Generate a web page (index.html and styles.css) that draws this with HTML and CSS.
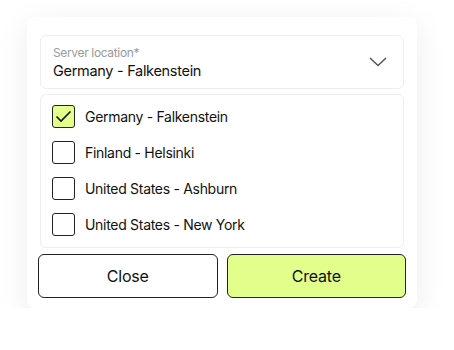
FILE: index.html
```html
<!DOCTYPE html>
<html lang="en">
<head>
    <meta charset="UTF-8">
    <title>Server location</title>
    <link rel="stylesheet" href="styles.css">
</head>
<body>
    <div class="card">
        <div class="select">
            <div class="select-text">
                <span class="label">Server location*</span>
                <span class="value">Germany - Falkenstein</span>
            </div>
            <svg class="chevron" width="18" height="10" viewBox="0 0 18 10">
                <path d="M1 1 L9 8.5 L17 1" fill="none" stroke="#555" stroke-width="1.5"/>
            </svg>
        </div>

        <div class="options">
            <label class="option">
                <span class="box checked">
                    <svg width="17" height="13" viewBox="0 0 17 13">
                        <path d="M1.5 6.5 L6 11 L15.5 1.5" fill="none" stroke="#111" stroke-width="1.6"/>
                    </svg>
                </span>
                Germany - Falkenstein
            </label>
            <label class="option"><span class="box"></span>Finland - Helsinki</label>
            <label class="option"><span class="box"></span>United States - Ashburn</label>
            <label class="option"><span class="box"></span>United States - New York</label>
        </div>

        <div class="actions">
            <button class="btn">Close</button>
            <button class="btn primary">Create</button>
        </div>
    </div>
</body>
</html>
```

FILE: styles.css
```css
* {
    margin: 0;
    padding: 0;
    box-sizing: border-box;
}

body {
    background: #fff;
    font-family: 'Inter', 'Liberation Sans', sans-serif;
    color: #111;
    padding: 17px 0 0 27px;
}

.card {
    width: 390px;
    background: #fff;
    border-radius: 8px;
    padding: 18px 11px 10px;
    box-shadow: 0 8px 32px rgba(0, 0, 0, 0.08);
}

.select {
    margin: 0 2px;
    height: 54px;
    border: 1px solid #eeeeee;
    border-radius: 6px;
    display: flex;
    align-items: center;
    justify-content: space-between;
    padding: 0 16px 0 12px;
}

.select-text {
    display: flex;
    flex-direction: column;
}

.label {
    font-size: 12px;
    letter-spacing: -0.35px;
    color: #9a9a9a;
    line-height: 17px;
}

.value {
    font-size: 14.5px;
    letter-spacing: -0.3px;
    line-height: 20px;
}

.options {
    margin: 5px 2px 0;
    border: 1px solid #eeeeee;
    border-radius: 6px;
    padding: 10px 11px 11px;
    display: flex;
    flex-direction: column;
    gap: 13px;
}

.option {
    display: flex;
    align-items: center;
    gap: 10px;
    font-size: 14px;
    letter-spacing: -0.3px;
    height: 23px;
}

.box {
    width: 23px;
    height: 23px;
    border: 1.5px solid #222;
    border-radius: 3px;
    display: flex;
    align-items: center;
    justify-content: center;
}

.box.checked {
    background: #e4ff8c;
}

.actions {
    display: flex;
    gap: 9px;
    margin-top: 6px;
}

.btn {
    flex: 1;
    height: 44px;
    border: 1px solid #222;
    border-radius: 6px;
    background: #fff;
    font-family: 'Inter', 'Liberation Sans', sans-serif;
    font-size: 16px;
    letter-spacing: -0.2px;
    color: #111;
}

.btn.primary {
    background: #e2ff8c;
}
```
